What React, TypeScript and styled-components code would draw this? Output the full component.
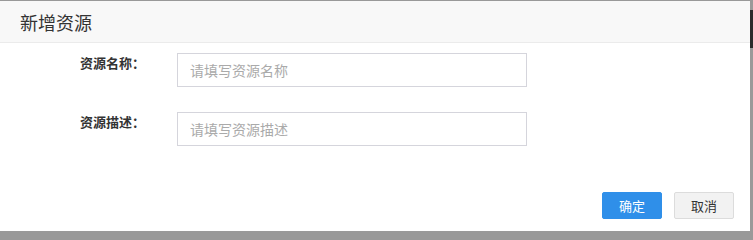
import { FC } from "react";
import styled, { createGlobalStyle } from "styled-components";

const GlobalStyle = createGlobalStyle`
  html, body {
    margin: 0;
    padding: 0;
    background: #999;
    font-family: "Noto Sans CJK SC", "Noto Sans", "Liberation Sans", sans-serif;
  }
`;

const Backdrop = styled.div`
  width: 753px;
  height: 235px;
  display: flex;
  padding-top: 1px;
  box-sizing: border-box;
  background: #999;
`;

const Modal = styled.div`
  width: 750px;
  height: 230px;
  background: #fff;
  display: flex;
  flex-direction: column;
`;

const Side = styled.div`
  flex: 1;
  display: flex;
  flex-direction: column;
  padding-top: 9px;
`;

const SideDark = styled.div`
  height: 38px;
  background: #2b2b2b;
`;

const Header = styled.div`
  height: 41px;
  background: #f8f8f8;
  border-bottom: 1px solid #ebebeb;
  display: flex;
  align-items: center;
  padding-left: 20px;
  font-size: 18px;
  color: #333;
`;

const Body = styled.div`
  flex: 1;
  display: flex;
  flex-direction: column;
  gap: 25px;
  padding-top: 10px;
`;

const Row = styled.div`
  display: flex;
  align-items: flex-start;
`;

const Label = styled.label`
  width: 145px;
  text-align: right;
  font-size: 13px;
  font-weight: bold;
  line-height: 20px;
  color: #333;
  margin-right: 32px;
`;

const Input = styled.input`
  width: 350px;
  height: 34px;
  box-sizing: border-box;
  border: 1px solid #d5d5dc;
  padding: 0 12px;
  font-size: 14px;
  font-family: inherit;
  color: #333;
  outline: none;
  &::placeholder {
    color: #aaa;
  }
`;

const Footer = styled.div`
  display: flex;
  justify-content: flex-end;
  gap: 12px;
  padding: 0 16px 12px 0;
`;

const Button = styled.button<{ $primary?: boolean }>`
  width: 60px;
  height: 27px;
  border-radius: 2px;
  font-size: 13px;
  font-family: inherit;
  cursor: pointer;
  border: 1px solid ${({ $primary }) => ($primary ? "#2f8fe9" : "#dcdcdc")};
  background: ${({ $primary }) => ($primary ? "#2f8fe9" : "#f2f2f2")};
  color: ${({ $primary }) => ($primary ? "#fff" : "#333")};
`;

const fields = [
  { label: "资源名称：", placeholder: "请填写资源名称" },
  { label: "资源描述：", placeholder: "请填写资源描述" },
];

const App: FC = () => {
  return (
    <>
      <GlobalStyle />
      <Backdrop>
        <Modal>
          <Header>新增资源</Header>
          <Body>
            {fields.map((f, key) => (
              <Row key={key}>
                <Label>{f.label}</Label>
                <Input placeholder={f.placeholder} />
              </Row>
            ))}
          </Body>
          <Footer>
            <Button $primary>确定</Button>
            <Button>取消</Button>
          </Footer>
        </Modal>
        <Side>
          <SideDark />
        </Side>
      </Backdrop>
    </>
  );
};

export default App;
